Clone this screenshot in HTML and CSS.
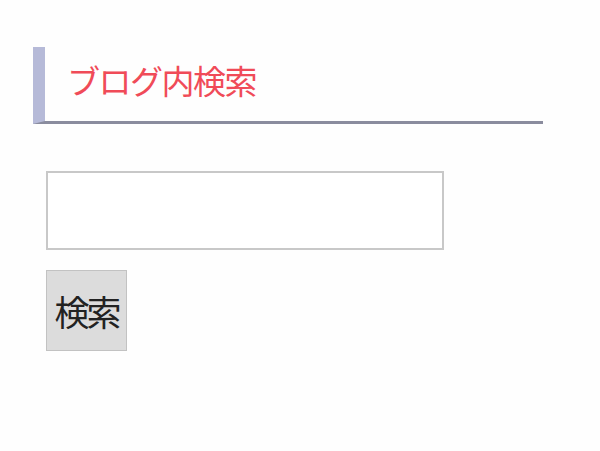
FILE: index.html
```html
<!DOCTYPE html>
<html lang="ja">
<head>
  <meta charset="UTF-8">
  <meta name="viewport" content="width=device-width, initial-scale=1.0">
  <title>ブログ内検索</title>
  <link rel="stylesheet" href="styles.css">
</head>
<body>

<div class="widget">
  <h2 class="widget-title">ブログ内検索</h2>
  <form class="search-form" onsubmit="return false;">
    <input class="search-input" type="text">
    <button class="search-btn" type="submit">検索</button>
  </form>
</div>

</body>
</html>
```

FILE: styles.css
```css
* { box-sizing: border-box; margin: 0; padding: 0; }
body {
  font-family: "Noto Sans CJK JP", "Noto Sans", sans-serif;
  background: #fefefe;
  color: #222;
}
.widget {
  width: 543px;
  padding: 47px 0 0 33px;
}
.widget-title {
  border-left: 12px solid #b6bad8;
  border-bottom: 3px solid #8a8c9e;
  padding: 13px 0 21px 22px;
  font-size: 33px;
  line-height: 40px;
  font-weight: normal;
  color: #f04b58;
  letter-spacing: -1.5px;
}
.search-form {
  display: flex;
  flex-direction: column;
  align-items: flex-start;
  gap: 20px;
  padding: 47px 0 0 13px;
}
.search-input {
  width: 398px;
  height: 79px;
  border: 2px solid #c8c8c8;
  background: #fff;
}
.search-btn {
  width: 81px;
  height: 81px;
  background: #dcdcdc;
  border: 1px solid #c2c2c2;
  font-family: inherit;
  font-size: 35px;
  color: #222;
  letter-spacing: -3px;
  cursor: pointer;
}
```
